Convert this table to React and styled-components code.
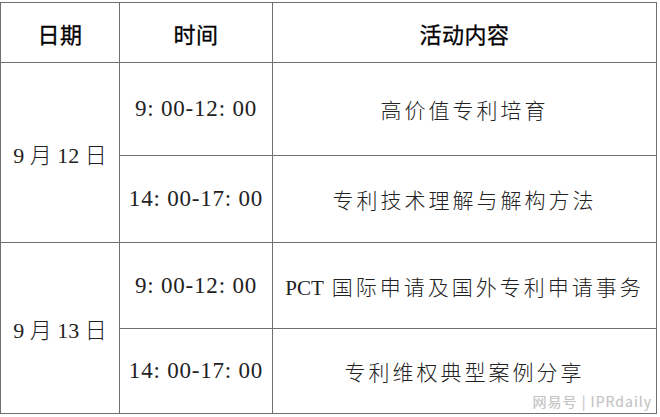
import { createGlobalStyle } from 'styled-components';
import styled from 'styled-components';

const schedule = [
  {
    date: '9 月 12 日',
    sessions: [
      { time: '9: 00-12: 00', topic: '高价值专利培育', height: 93 },
      { time: '14: 00-17: 00', topic: '专利技术理解与解构方法', height: 87 },
    ],
  },
  {
    date: '9 月 13 日',
    sessions: [
      { time: '9: 00-12: 00', latin: 'PCT', topic: '国际申请及国外专利申请事务', height: 86 },
      { time: '14: 00-17: 00', topic: '专利维权典型案例分享', height: 85 },
    ],
  },
];

const GlobalStyle = createGlobalStyle`
  html, body {
    margin: 0;
    padding: 0;
    background: #fff;
  }
`;

const Page = styled.div`
  position: relative;
  width: 660px;
  height: 417px;
  padding-top: 2px;
  box-sizing: border-box;
  overflow: hidden;
`;

const Table = styled.table`
  border-collapse: collapse;
  table-layout: fixed;
  width: 656px;
  color: #1a1a1a;
  td, th {
    border: 1px solid #6f6f6f;
    padding: 0;
    text-align: center;
    vertical-align: middle;
  }
`;

const HeadCell = styled.th`
  height: 59px;
  font-family: 'Noto Sans CJK SC', 'Liberation Sans', sans-serif;
  font-size: 22px;
  font-weight: 400;
  color: #000;
  letter-spacing: 0.5px;
  -webkit-text-stroke: 0.3px #000;
`;

const DateCell = styled.td`
  font-family: 'Liberation Serif', 'Noto Sans CJK SC', serif;
  font-size: 22px;
  font-weight: 300;
  color: #222;
`;

const TimeCell = styled.td`
  font-family: 'Liberation Serif', 'Noto Sans CJK SC', serif;
  font-size: 23px;
  color: #222;
  letter-spacing: 0.8px;
`;

const TopicCell = styled.td`
  font-family: 'Liberation Serif', 'Noto Sans CJK SC', serif;
  font-size: 21px;
  font-weight: 300;
  color: #222;
  letter-spacing: 3px;
  white-space: nowrap;
`;

const Latin = styled.span`
  letter-spacing: 0;
  margin-right: 8px;
`;

const Watermark = styled.div`
  position: absolute;
  right: 8px;
  bottom: 6px;
  font-family: 'Noto Sans CJK SC', 'Liberation Sans', sans-serif;
  font-size: 14px;
  letter-spacing: 1px;
  color: #c4c4c4;
  text-shadow: 0 0 1px #e6e6e6;
`;

export default function App() {
  return (
    <Page>
      <GlobalStyle />
      <Table>
        <colgroup>
          <col style={{ width: 119 }} />
          <col style={{ width: 153 }} />
          <col style={{ width: 384 }} />
        </colgroup>
        <thead>
          <tr>
            <HeadCell>日期</HeadCell>
            <HeadCell>时间</HeadCell>
            <HeadCell>活动内容</HeadCell>
          </tr>
        </thead>
        <tbody>
          {schedule.map((day) =>
            day.sessions.map((s, i) => (
              <tr key={day.date + s.time} style={{ height: s.height }}>
                {i === 0 && <DateCell rowSpan={day.sessions.length}>{day.date}</DateCell>}
                <TimeCell>{s.time}</TimeCell>
                <TopicCell>
                  {s.latin && <Latin>{s.latin}</Latin>}
                  {s.topic}
                </TopicCell>
              </tr>
            ))
          )}
        </tbody>
      </Table>
      <Watermark>网易号 | IPRdaily</Watermark>
    </Page>
  );
}
